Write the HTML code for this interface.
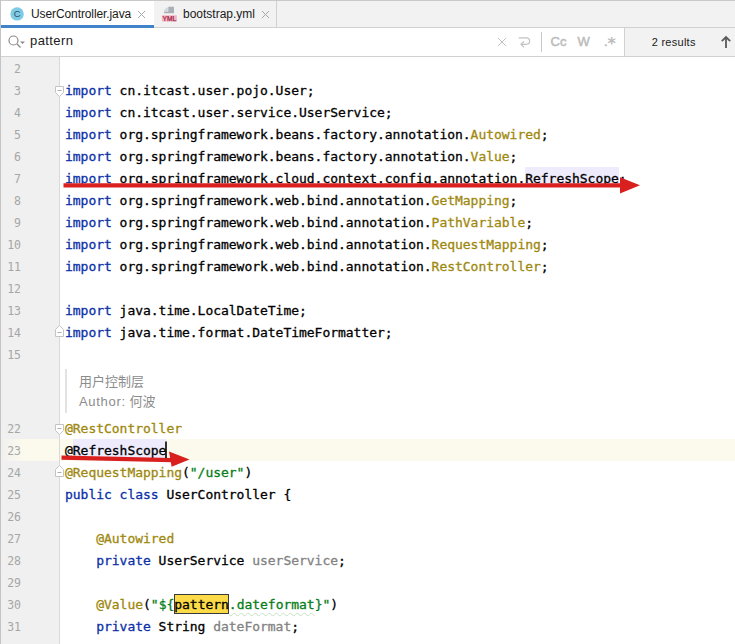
<!DOCTYPE html>
<html><head><meta charset="utf-8">
<style>
html,body{margin:0;padding:0;}
body{width:735px;height:644px;overflow:hidden;background:#fff;position:relative;font-family:"Liberation Sans","Noto Sans CJK SC",sans-serif;}
#tabs{position:absolute;left:0;top:0;width:735px;height:28px;background:#f2f2f2;border-top:1px solid #c9c9c9;border-bottom:1px solid #d1d1d1;box-sizing:border-box;}
.tab{position:absolute;top:0;height:26px;font-size:12px;color:#1a1a1a;line-height:26px;}
#tab1{left:1px;width:153px;background:#fff;border-bottom:3px solid #4083c9;height:24px;z-index:2;}
#tab2{left:154px;width:122px;border-right:1px solid #d1d1d1;}
.tab span.t{position:absolute;top:0;white-space:nowrap;}
#search{position:absolute;left:0;top:28px;width:735px;height:29px;background:#fff;border-bottom:1px solid #d1d1d1;box-sizing:border-box;}
#sright{position:absolute;left:624px;top:0;width:111px;height:28px;background:#f2f2f2;border-left:1px solid #d1d1d1;box-sizing:border-box;}
#gutter{position:absolute;left:0;top:57px;width:60px;height:587px;background:#f0f0f0;border-right:1px solid #d9d9d9;box-sizing:border-box;}
#leftborder{position:absolute;left:0;top:0;width:1px;height:644px;background:#c4c4c4;}
.ln{position:absolute;left:0;width:21px;text-align:right;margin-top:1px;font-family:"DejaVu Sans Mono","Liberation Mono",monospace;font-size:11.5px;color:#a6a6a6;line-height:22px;height:22px;}
.cl{position:absolute;left:65px;margin-top:1px;-webkit-text-stroke:0.3px;font-family:"DejaVu Sans Mono","Liberation Mono",monospace;font-size:13px;letter-spacing:-0.027px;color:#000;line-height:22px;height:22px;white-space:pre;}
.k{color:#0a30a8;}
.a{color:#9e880d;}
.s{color:#067d17;}
.f{color:#828282;}
.g{color:#8c8c8c;}
#curline{position:absolute;left:0;top:439px;width:735px;height:22px;background:#fcfaed;}
.doc{position:absolute;left:79px;font-size:13px;color:#8c8c8c;line-height:20px;white-space:nowrap;}

.hl{background:#edebfc;}
.m{color:#000;}
.w{text-decoration:underline wavy #c4e2c4 1px;text-underline-offset:3px;}
.box{position:absolute;box-sizing:border-box;}
.sb{position:absolute;top:0;line-height:28px;font-size:13px;color:#bcbcbc;-webkit-text-stroke:0.5px #bcbcbc;}
</style></head><body>
<div id="tabs">
 <div class="tab" id="tab1">
  <svg style="position:absolute;left:9px;top:6px" width="14" height="14" viewBox="0 0 14 14"><circle cx="7.1" cy="6.9" r="6.7" fill="#7ecbe6"/><text x="7.1" y="10.3" font-family="Liberation Sans,sans-serif" font-size="9.5" text-anchor="middle" fill="#33505e">C</text></svg>
  <span class="t" style="left:30px;letter-spacing:-0.1px">UserController.java</span>
  <svg style="position:absolute;left:136px;top:9px" width="9" height="9" viewBox="0 0 9 9"><path d="M1 1L8 8M8 1L1 8" stroke="#a8a8a8" stroke-width="1" fill="none"/></svg>
 </div>
 <div class="tab" id="tab2">
  <svg style="position:absolute;left:6px;top:4px" width="20" height="18" viewBox="0 0 20 18"><path d="M8.3 1.8H14V8.3H4V6.4H8.3Z" fill="#a9b0b8"/><path d="M7.6 2V5.8H4Z" fill="#c9ced3"/><rect x="1.9" y="10.3" width="15" height="6.1" fill="#f7b3c2"/><text x="9.4" y="15.8" font-family="Liberation Sans,sans-serif" font-size="6.6" text-anchor="middle" fill="#9c2b4a" stroke="#9c2b4a" stroke-width="0.25">YML</text></svg>
  <span class="t" style="left:29px">bootstrap.yml</span>
  <svg style="position:absolute;left:107px;top:9px" width="9" height="9" viewBox="0 0 9 9"><path d="M1 1L8 8M8 1L1 8" stroke="#a8a8a8" stroke-width="1" fill="none"/></svg>
 </div>
</div>
<div id="search">
 <svg style="position:absolute;left:7px;top:6px" width="20" height="16" viewBox="0 0 20 16"><circle cx="6.5" cy="6.5" r="4.5" stroke="#8a8a8a" stroke-width="1.2" fill="none"/><path d="M10 10L13.5 13.5" stroke="#8a8a8a" stroke-width="1.2"/><path d="M13 7.5H18L15.5 10Z" fill="#8a8a8a"/></svg>
 <span style="position:absolute;left:30px;top:0;line-height:26px;font-size:13px;letter-spacing:0.4px;color:#1a1a1a">pattern</span>
 <svg style="position:absolute;left:497px;top:9px" width="10" height="10" viewBox="0 0 10 10"><path d="M1 1L9 9M9 1L1 9" stroke="#c2c2c2" stroke-width="1" fill="none"/></svg>
 <svg style="position:absolute;left:517px;top:7px" width="15" height="14" viewBox="0 0 15 14"><path d="M1.7 2.8H9.4a3.25 3.25 0 0 1 0 6.5H4.2M7 6.3L4 9.3L7 12.3" stroke="#c2c2c2" stroke-width="1.2" fill="none"/></svg>
 <div style="position:absolute;left:541px;top:4px;width:1px;height:20px;background:#c9c9c9"></div>
 <span class="sb" style="left:550.5px">Cc</span>
 <span class="sb" style="left:577.5px">W</span>
 <span class="sb" style="left:604px">.</span>
 <span class="sb" style="left:607.5px;top:2px;font-family:'DejaVu Sans','Liberation Sans',sans-serif;font-size:16px;font-weight:bold;-webkit-text-stroke:0">*</span>
 <div id="sright">
  <span style="position:absolute;left:26.7px;top:0;line-height:28px;font-size:11px;letter-spacing:0.27px;color:#1a1a1a;white-space:nowrap">2 results</span>
  <svg style="position:absolute;left:95px;top:7px" width="12" height="14" viewBox="0 0 12 14"><path d="M6 13V2.5M1.8 6.2L6 2L10.2 6.2" stroke="#5a5a5a" stroke-width="1.8" fill="none"/></svg>
 </div>
</div>
<div id="curline"></div>
<div id="gutter"></div>
<div style="position:absolute;left:1px;top:439px;width:58px;height:22px;background:linear-gradient(to right,#f0f0f0 0,#fcfaed 22px)"></div>
<div id="leftborder"></div>
<div id="over">
<div class="box" style="left:525px;top:167px;width:94px;height:19px;background:#edebfc"></div>
<div class="box" style="left:73px;top:439px;width:93px;height:19px;background:#edebfc"></div>
<div class="box" style="left:174px;top:594px;width:55px;height:20px;background:#fcda48;border:1px solid #3a3a3a"></div>
</div>
<div id="code">
<div class="ln" style="top:57px">2</div>
<div class="ln" style="top:79px">3</div>
<div class="cl" style="top:79px"><span class="k">import</span> cn.itcast.user.pojo.User;</div>
<div class="ln" style="top:101px">4</div>
<div class="cl" style="top:101px"><span class="k">import</span> cn.itcast.user.service.UserService;</div>
<div class="ln" style="top:123px">5</div>
<div class="cl" style="top:123px"><span class="k">import</span> org.springframework.beans.factory.annotation.<span class="a">Autowired</span>;</div>
<div class="ln" style="top:145px">6</div>
<div class="cl" style="top:145px"><span class="k">import</span> org.springframework.beans.factory.annotation.<span class="a">Value</span>;</div>
<div class="ln" style="top:167px">7</div>
<div class="cl" style="top:167px"><span class="k">import</span> org.springframework.cloud.context.config.annotation.<span>RefreshScope</span>;</div>
<div class="ln" style="top:189px">8</div>
<div class="cl" style="top:189px"><span class="k">import</span> org.springframework.web.bind.annotation.<span class="a">GetMapping</span>;</div>
<div class="ln" style="top:211px">9</div>
<div class="cl" style="top:211px"><span class="k">import</span> org.springframework.web.bind.annotation.<span class="a">PathVariable</span>;</div>
<div class="ln" style="top:233px">10</div>
<div class="cl" style="top:233px"><span class="k">import</span> org.springframework.web.bind.annotation.<span class="a">RequestMapping</span>;</div>
<div class="ln" style="top:255px">11</div>
<div class="cl" style="top:255px"><span class="k">import</span> org.springframework.web.bind.annotation.<span class="a">RestController</span>;</div>
<div class="ln" style="top:277px">12</div>
<div class="ln" style="top:299px">13</div>
<div class="cl" style="top:299px"><span class="k">import</span> java.time.LocalDateTime;</div>
<div class="ln" style="top:321px">14</div>
<div class="cl" style="top:321px"><span class="k">import</span> java.time.format.DateTimeFormatter;</div>
<div class="ln" style="top:343px">15</div>
<div class="ln" style="top:417px">22</div>
<div class="cl" style="top:417px"><span class="a">@RestController</span></div>
<div class="ln" style="top:439px">23</div>
<div class="cl" style="top:439px">@<span>RefreshScope</span></div>
<div class="ln" style="top:461px">24</div>
<div class="cl" style="top:461px"><span class="a">@RequestMapping</span>(<span class="s">"/user"</span>)</div>
<div class="ln" style="top:483px">25</div>
<div class="cl" style="top:483px"><span class="k">public class</span> UserController {</div>
<div class="ln" style="top:505px">26</div>
<div class="ln" style="top:527px">27</div>
<div class="cl" style="top:527px">    <span class="a">@Autowired</span></div>
<div class="ln" style="top:549px">28</div>
<div class="cl" style="top:549px">    <span class="k">private</span> UserService <span class="f">userService</span>;</div>
<div class="ln" style="top:571px">29</div>
<div class="ln" style="top:593px">30</div>
<div class="cl" style="top:593px">    <span class="a">@Value</span>(<span class="s">"${</span><span class="m">pattern</span><span class="s"><span class="w">.dateformat</span>}"</span>)</div>
<div class="ln" style="top:615px">31</div>
<div class="cl" style="top:615px">    <span class="k">private</span> String <span class="f">dateFormat</span>;</div>
<div style="position:absolute;left:65px;top:369px;width:2px;height:44px;background:#e2e2e2"></div>
<div class="doc" style="top:372px">用户控制层</div>
<div class="doc" style="top:392px"><span style="letter-spacing:0.7px">Author:</span> 何波</div>
</div>
<svg style="position:absolute;left:0;top:0;pointer-events:none" width="735" height="644" viewBox="0 0 735 644">
<path d="M63.5 185.4H622" stroke="#d9201f" stroke-width="4.2" fill="none"/>
<path d="M620 177.3L640 185.3L620 193.4Z" fill="#d9201f"/>
<path d="M61.5 457.6L172 460.2" stroke="#d9201f" stroke-width="4.2" fill="none"/>
<path d="M169 451.6L189.5 459.5L171.6 466.8Z" fill="#d9201f"/>
<rect x="165.2" y="441.5" width="1.6" height="16.5" fill="#000"/>
<g fill="#fff" stroke="#c4c4c4" stroke-width="1">
<path d="M55.5 86.5H63.5V92.5L59.5 96.5L55.5 92.5Z"/>
<path d="M55.5 424.5H63.5V430.5L59.5 434.5L55.5 430.5Z"/>
<path d="M55.5 476.5H63.5V469.5L59.5 465.5L55.5 469.5Z"/>
<path d="M55.5 336.5H63.5V329.5L59.5 325.5L55.5 329.5Z"/>
</g>
<g stroke="#b0b0b0" stroke-width="1"><path d="M57.5 90.5H61.5M57.5 428.5H61.5M57.5 472.5H61.5M57.5 332.5H61.5"/></g>
</svg>
</body></html>
